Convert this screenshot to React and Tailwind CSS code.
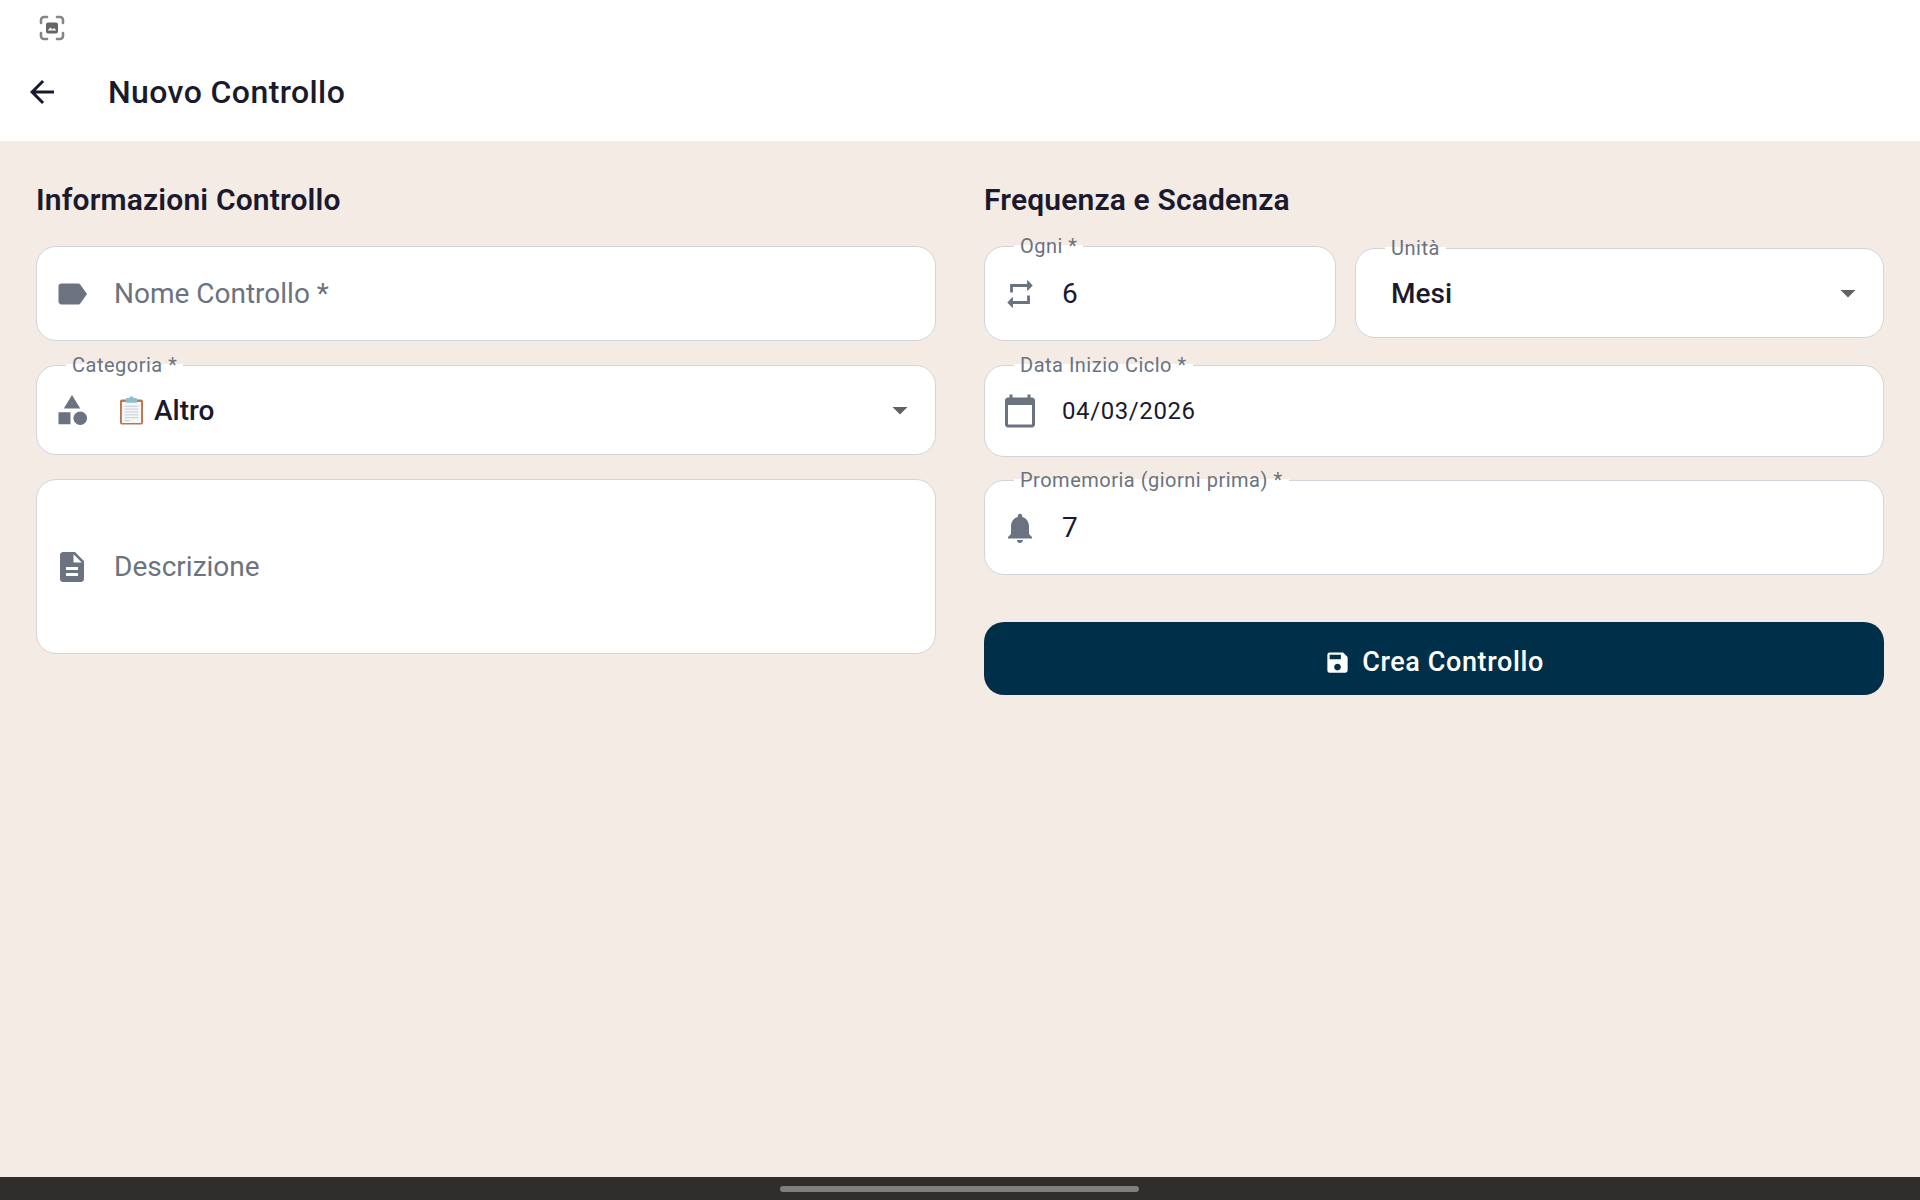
import React from "react";
import {
  MdArrowBack, MdLabel, MdCategory, MdDescription, MdRepeat, MdCalendarToday,
  MdNotifications, MdSave, MdArrowDropDown,
} from "react-icons/md";

function ScreenshotIcon() {
  return (
    <svg width="26" height="26" viewBox="0 0 26 26" fill="none" className="text-[#858585]">
      <path d="M2 8V5a3 3 0 0 1 3-3h3M18 2h3a3 3 0 0 1 3 3v3M24 18v3a3 3 0 0 1-3 3h-3M8 24H5a3 3 0 0 1-3-3v-3" stroke="currentColor" strokeWidth="2.6" strokeLinecap="round" />
      <rect x="7" y="7.5" width="12" height="11" rx="2" fill="#666" />
      <path d="M8.5 15.5l3-3 2 2 1.5-1.5 2.5 2.5z" fill="#fff" />
    </svg>
  );
}

function ClipboardIcon() {
  return (
    <svg width="25" height="30" viewBox="0 0 26 30">
      <rect x="1" y="3" width="24" height="26" rx="2" fill="#b9744a" />
      <rect x="3" y="5.5" width="20" height="22" fill="#f4f6f8" />
      <rect x="7" y="1.5" width="12" height="5" rx="1.5" fill="#8fbdd0" />
      <rect x="11" y="0" width="4" height="3" rx="1" fill="#8fbdd0" />
      <path d="M6 10h14M6 13h14M6 16h14M6 19h14M6 22h14M6 25h5" stroke="#c3ccd2" strokeWidth="1" />
    </svg>
  );
}

function Field({ label, className = "", children }) {
  return (
    <div className={`relative flex items-center rounded-[20px] border-[1.5px] border-[#d1d5db] bg-white ${className}`}>
      {label && (
        <span className="absolute left-[29px] top-[-13px] h-[24px] bg-gradient-to-b from-transparent from-[46%] to-white to-[46%] px-[6px] text-[20px] leading-[24px] tracking-[0.5px] text-[#6b7280] whitespace-nowrap">
          {label}
        </span>
      )}
      {children}
    </div>
  );
}

const iconBox = "flex w-[69px] shrink-0 items-center justify-center mr-[8px] text-[#6b7280]";

export default function App() {
  return (
    <div className="flex h-[1200px] flex-col bg-[#f4ebe4] text-[#1a1a2e] font-['Roboto',sans-serif]">
      <header className="h-[141px] shrink-0 bg-white">
        <div className="h-[56px] pl-[39px] pt-[15px]">
          <ScreenshotIcon />
        </div>
        <div className="flex h-[72px] items-center pl-[24px]">
          <MdArrowBack size={36} className="text-[#1a1a2e]" />
          <h1 className="ml-[48px] text-[32px] font-medium leading-[40px] tracking-[0.4px]">Nuovo Controllo</h1>
        </div>
      </header>

      <main className="grid flex-1 grid-cols-2 items-start gap-x-[48px] px-[36px] pt-[41px]">
        <section className="flex flex-col">
          <h2 className="mb-[28px] text-[30px] font-semibold leading-[36px] tracking-[0.15px]">Informazioni Controllo</h2>
          <Field className="h-[95px]">
            <div className={iconBox}><MdLabel size={36} /></div>
            <span className="text-[28px] leading-[36px] text-[#6b7280]">Nome Controllo *</span>
          </Field>
          <Field label="Categoria *" className="mt-[24px] h-[90px]">
            <div className={iconBox}><MdCategory size={36} /></div>
            <span className="ml-[5px] flex items-center gap-[10px] pt-[1px] text-[28px] font-medium leading-[36px]">
              <ClipboardIcon />
              Altro
            </span>
            <MdArrowDropDown size={36} className="ml-auto mr-[17px] text-[#616161]" />
          </Field>
          <Field className="mt-[24px] h-[175px]">
            <div className={iconBox}><MdDescription size={36} /></div>
            <span className="text-[28px] leading-[36px] text-[#6b7280]">Descrizione</span>
          </Field>
        </section>

        <section className="flex flex-col">
          <h2 className="mb-[28px] text-[30px] font-semibold leading-[36px] tracking-[0.15px]">Frequenza e Scadenza</h2>
          <div className="flex items-start gap-[19px]">
            <Field label="Ogni *" className="h-[95px] w-[352px] shrink-0">
              <div className={iconBox}><MdRepeat size={34} /></div>
              <span className="pt-[1px] text-[28px] leading-[36px]">6</span>
            </Field>
            <Field label="Unità" className="mt-[2px] h-[90px] flex-1">
              <span className="ml-[35px] pt-[1px] text-[28px] font-medium leading-[36px]">Mesi</span>
              <MdArrowDropDown size={36} className="ml-auto mr-[17px] text-[#616161]" />
            </Field>
          </div>
          <Field label="Data Inizio Ciclo *" className="mt-[24px] h-[92px]">
            <div className={iconBox}><MdCalendarToday size={36} /></div>
            <span className="text-[24px] leading-[32px] tracking-[0.6px]">04/03/2026</span>
          </Field>
          <Field label="Promemoria (giorni prima) *" className="mt-[23px] h-[95px]">
            <div className={iconBox}><MdNotifications size={36} /></div>
            <span className="text-[28px] leading-[36px]">7</span>
          </Field>
          <button className="mt-[47px] flex h-[73px] items-center justify-center gap-[11px] rounded-[20px] bg-[#003049] pt-[7px] text-white">
            <MdSave size={27} />
            <span className="text-[27px] font-medium leading-[32px] tracking-[0.6px]">Crea Controllo</span>
          </button>
        </section>
      </main>

      <footer className="flex h-[23px] shrink-0 items-center justify-center bg-[#2f2e2c]">
        <div className="h-[6px] w-[359px] -translate-x-[1px] rounded-full bg-[#7f7f7d]" />
      </footer>
    </div>
  );
}
